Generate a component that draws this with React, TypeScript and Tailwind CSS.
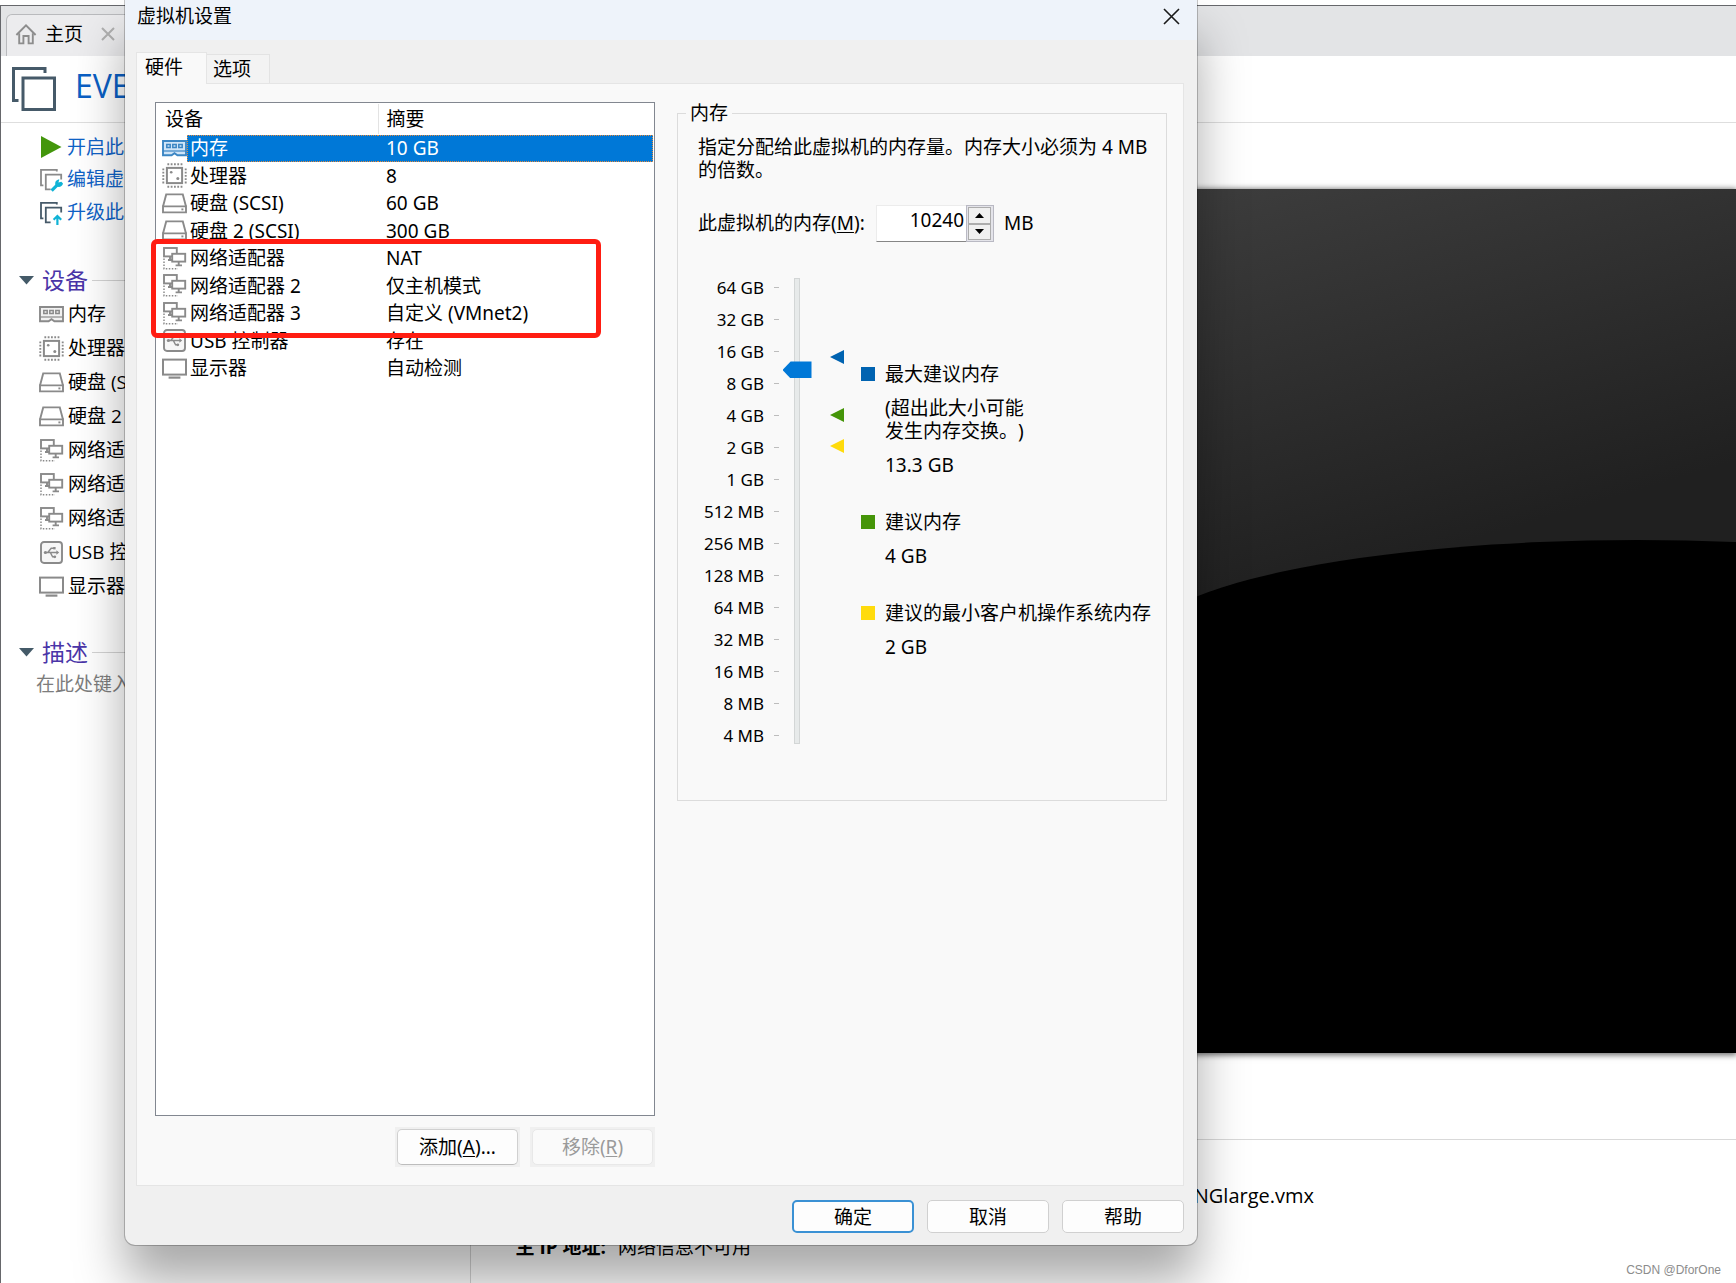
import React from "react";

type IconProps = { kind: string; active?: boolean };

function DeviceIcon({ kind, active }: IconProps) {
  const c = active ? "#3b86c4" : "#8a8a8a";
  return (
    <svg width="25" height="25" viewBox="0 0 25 25" fill="none" stroke={c} strokeWidth="1.9" className="shrink-0" aria-hidden="true">
      {kind === "memory" && (
        <>
          <path d="M1 5H24V19.2H15.4L12.5 17.2L9.6 19.2H1Z" fill={active ? "#cfe4f7" : "#f1f1f1"} />
          <path d="M4.8 8.4h3.4v3H4.8zM10.8 8.4h3.4v3h-3.4zM16.8 8.4h3.4v3h-3.4z" strokeWidth="1.5" />
          <path d="M1 15H24" strokeWidth="1.2" />
        </>
      )}
      {kind === "cpu" && (
        <>
          <rect x="4.9" y="4.9" width="15.2" height="15.2" strokeWidth="2" />
          <path d="M5.4 1.3H20.4M5.4 23.7H20.4" strokeWidth="1.9" strokeDasharray="1.8 1.5" />
          <path d="M1.3 5.4V20.4M23.7 5.4V20.4" strokeWidth="1.9" strokeDasharray="1.8 1.5" />
          <circle cx="9.2" cy="9.2" r="1.3" fill={c} stroke="none" />
          <circle cx="15.8" cy="15.6" r="1.5" fill={c} stroke="none" />
        </>
      )}
      {kind === "disk" && (
        <>
          <path d="M1 15.4L4.2 3.4H20.8L24 15.4" />
          <path d="M1 15.4H24V21.4H1Z" />
          <path d="M19.4 18.4H21.4" />
        </>
      )}
      {kind === "net" && (
        <>
          <rect x="2" y="2" width="12.8" height="8.4" />
          <path d="M6 14H10M8 10.6V14" />
          <rect x="10.2" y="7.8" width="13" height="7.8" fill="#fff" />
          <path d="M16.7 16V19.4M13.6 19.4H20" />
          <path d="M2 12.6V22.8H16" strokeDasharray="1.5 1.5" strokeWidth="1.5" />
        </>
      )}
      {kind === "usb" && (
        <>
          <rect x="2" y="2" width="21" height="21" rx="3" fill="#f6f6f6" />
          <path d="M6.4 12.5H18.4M9 12.3L12.2 8.2H15M11.4 12.7L13.6 16.8H15.6" strokeWidth="1.4" />
          <circle cx="6.4" cy="12.5" r="1.6" fill={c} stroke="none" />
          <path d="M17.4 10.2L20.2 12.5L17.4 14.8Z" fill={c} stroke="none" />
          <rect x="14.2" y="7" width="2.4" height="2.4" fill={c} stroke="none" />
          <circle cx="15.8" cy="16.8" r="1.4" fill={c} stroke="none" />
        </>
      )}
      {kind === "display" && (
        <>
          <rect x="1" y="3.6" width="23" height="15" strokeWidth="2" />
          <path d="M6.6 21.6H18.4" strokeWidth="2.2" />
        </>
      )}
    </svg>
  );
}

const devices = [
  { kind: "memory", name: "内存", summary: "10 GB" },
  { kind: "cpu", name: "处理器", summary: "8" },
  { kind: "disk", name: "硬盘 (SCSI)", summary: "60 GB" },
  { kind: "disk", name: "硬盘 2 (SCSI)", summary: "300 GB" },
  { kind: "net", name: "网络适配器", summary: "NAT" },
  { kind: "net", name: "网络适配器 2", summary: "仅主机模式" },
  { kind: "net", name: "网络适配器 3", summary: "自定义 (VMnet2)" },
  { kind: "usb", name: "USB 控制器", summary: "存在" },
  { kind: "display", name: "显示器", summary: "自动检测" },
];

const scale = ["64 GB", "32 GB", "16 GB", "8 GB", "4 GB", "2 GB", "1 GB", "512 MB", "256 MB", "128 MB", "64 MB", "32 MB", "16 MB", "8 MB", "4 MB"];

function SectionHeading({ children }: { children: React.ReactNode }) {
  return (
    <div className="flex h-[34px] items-center pl-[18px]">
      <svg width="15" height="9" viewBox="0 0 15 9" className="mr-2 shrink-0" aria-hidden="true">
        <path d="M0 0H15L7.5 8.5Z" fill="#445a68" />
      </svg>
      <h2 className="mr-1 text-[23px] leading-8 text-[#4a35a8]">{children}</h2>
      <div className="h-px flex-1 bg-[#d4d4d4]" />
    </div>
  );
}

function WindowsGlyph({ kind }: { kind: "edit" | "upgrade" }) {
  const c = kind === "edit" ? "#8a8a8a" : "#465a69";
  return (
    <svg width="24" height="24" viewBox="0 0 24 24" fill="none" stroke={c} strokeWidth="1.8" aria-hidden="true">
      <path d="M17.8 3.4V1.8H2V17.4H4.4" />
      <path d="M11.6 21.4H6.8V6.6H22.2V11.4" />
      {kind === "edit" ? (
        <>
          <path d="M12.6 22.6L18.4 16.8" stroke="#10b3d6" strokeWidth="3.2" />
          <path d="M20.4 11.6L19.4 14.6L22.4 13.8L24 15.6C23.4 18.4 20.4 19.6 18.2 18.6L16.4 16.8C15.6 14 17.4 11.6 20.4 11.6Z" fill="#10b3d6" stroke="none" />
        </>
      ) : (
        <path d="M18.4 24V15.8M14.6 18.8L18.4 15L22.2 18.8" stroke="#10b3d6" strokeWidth="2.2" />
      )}
    </svg>
  );
}

function Library() {
  return (
    <div className="flex min-h-screen flex-col bg-white pt-[5px] font-['Open_Sans','Noto_Sans_CJK_SC',sans-serif]">
      <div className="flex flex-1 flex-col border-t border-l border-[#66676b]">
        <div className="flex h-[50px] items-end bg-[#e3e4e6] pl-[5px]">
          <div className="flex h-[42px] w-[130px] items-center rounded-t-md border border-b-0 border-[#b9babd] bg-[#ececee] pb-1 pl-2">
            <svg width="22" height="22" viewBox="0 0 22 22" fill="none" stroke="#8d8d8d" strokeWidth="1.9" aria-hidden="true">
              <path d="M1.4 12L11 2.4L20.6 12" />
              <path d="M4.2 10.2V20.4H8.4V13H13.6V20.4H17.8V10.2" />
            </svg>
            <a href="#home" className="ml-2 w-[56px] text-[19px] leading-6 text-black">主页</a>
            <button aria-label="关闭主页">
              <svg width="14" height="14" viewBox="0 0 14 14" stroke="#b0b0b0" strokeWidth="2" aria-hidden="true">
                <path d="M1 1L13 13M13 1L1 13" />
              </svg>
            </button>
          </div>
        </div>
        <header className="flex h-[67px] items-start border-b border-[#dedede] pt-2.5 pl-[10px]">
          <svg width="46" height="46" viewBox="0 0 46 46" fill="none" stroke="#465a69" strokeWidth="3" aria-hidden="true">
            <path d="M34 7V2.5H2.5V34.5H7.5" />
            <rect x="12" y="12" width="31.5" height="31.5" />
          </svg>
          <h1 className="ml-[18px] text-[32px] leading-10 text-[#0a5fc4]">EVE</h1>
        </header>
        <div className="flex flex-1">
          <aside className="w-[470px] border-r border-[#d4d4d4] pt-2">
            <ul className="pl-[38px] text-[19px] text-[#0f62c6]">
              <li className="flex h-8 items-center gap-1">
                <svg width="24" height="24" viewBox="0 0 24 24" aria-hidden="true">
                  <path d="M2 1L22.5 12L2 23Z" fill="#43960c" />
                </svg>
                <a href="#start">开启此</a>
              </li>
              <li className="flex h-[33px] items-center gap-1">
                <WindowsGlyph kind="edit" />
                <a href="#edit">编辑虚</a>
              </li>
              <li className="flex h-[33px] items-center gap-1">
                <WindowsGlyph kind="upgrade" />
                <a href="#upgrade">升级此</a>
              </li>
            </ul>
            <section className="mt-[34px]">
              <SectionHeading>设备</SectionHeading>
              <ul className="pl-[38px] text-[19px] text-black">
                {devices.map((d) => (
                  <li key={d.name} className="flex h-[34px] items-center gap-1">
                    <DeviceIcon kind={d.kind} />
                    {d.name}
                  </li>
                ))}
              </ul>
            </section>
            <section className="mt-8">
              <SectionHeading>描述</SectionHeading>
              <p className="pl-[35px] text-[19px] leading-[30px] text-[#7d7d7d]">在此处键入</p>
            </section>
          </aside>
          <main className="min-w-0 flex-1">
            <div className="mt-[66px] ml-[420px] h-[864px] bg-black shadow-[0_1px_6px_1px_rgba(0,0,0,0.6)]">
              <svg width="100%" height="100%" viewBox="0 0 846 864" preserveAspectRatio="none" aria-hidden="true">
                <defs>
                  <linearGradient id="wall" gradientUnits="userSpaceOnUse" x1="300" y1="0" x2="420" y2="400">
                    <stop offset="0" stopColor="#3d3d3d" />
                    <stop offset="1" stopColor="#202020" />
                  </linearGradient>
                </defs>
                <rect width="846" height="864" fill="url(#wall)" />
                <ellipse cx="747" cy="458" rx="500" ry="107" fill="#000" />
                <rect y="458" width="846" height="406" fill="#000" />
              </svg>
            </div>
            <div className="mt-[86px] border-t border-[#d9d9d9] pt-11 leading-6 text-black">
              <dl className="grid grid-cols-[139px_704px] gap-y-[27px]">
                <dt className="text-right text-[19px] font-bold">配置文件:</dt>
                <dd className="text-right text-[20px]">EVE-NGlarge.vmx</dd>
                <dt className="pr-1 text-right text-[19px] font-bold">主 IP 地址:</dt>
                <dd className="pl-2 text-[19px]">网络信息不可用</dd>
              </dl>
            </div>
          </main>
        </div>
      </div>
    </div>
  );
}

function HardwareTable() {
  return (
    <div className="relative h-[1014px] w-[500px] border border-[#828790] bg-white px-px pt-px">
      <table className="w-full table-fixed border-collapse text-left text-[19px] leading-[22px]">
        <thead>
          <tr className="h-[30px]">
            <th className="w-[221px] border-r border-[#e3e3e3] pl-2 font-normal">设备</th>
            <th className="pl-2 font-normal">摘要</th>
          </tr>
        </thead>
        <tbody>
          {devices.map((d, i) => (
            <tr key={d.name} className="odd:h-7 even:h-[27px]">
              <td className="p-0">
                <div className="flex items-center pl-[5px]">
                  <DeviceIcon kind={d.kind} active={i === 0} />
                  <span
                    className={
                      i === 0
                        ? "flex h-[27px] flex-1 items-center border border-r-0 border-dotted border-[#e58a3c] bg-[#0078d7] pl-0.5 text-white"
                        : "flex h-[27px] flex-1 items-center pl-[3px]"
                    }
                  >
                    {d.name}
                  </span>
                </div>
              </td>
              <td className="p-0">
                <div
                  className={
                    i === 0
                      ? "flex h-[27px] items-center border border-l-0 border-dotted border-[#e58a3c] bg-[#0078d7] pl-2 text-white"
                      : "flex h-[27px] items-center pl-2"
                  }
                >
                  {d.summary}
                </div>
              </td>
            </tr>
          ))}
        </tbody>
      </table>
      <div className="absolute top-[136px] -left-[5px] h-[99px] w-[450px] rounded-md border-[5px] border-[#ff1d12]" />
    </div>
  );
}

function Marker({ color }: { color: string }) {
  return (
    <svg width="14" height="14" viewBox="0 0 14 14" className="block" aria-hidden="true">
      <path d="M0 7L14 0V14Z" fill={color} />
    </svg>
  );
}

function MemoryPanel() {
  return (
    <fieldset className="h-[699px] w-[490px] min-w-0 self-start border border-[#dcdcdc] px-5 text-[19px] leading-[23px]">
      <legend className="-ml-3 px-1">内存</legend>
      <p className="mt-[11px] -mr-3">指定分配给此虚拟机的内存量。内存大小必须为 4 MB 的倍数。</p>
      <div className="mt-[23px] flex h-[37px] items-center">
        <label htmlFor="mem" className="w-[178px]">
          此虚拟机的内存(<u className="underline-offset-2">M</u>):
        </label>
        <input
          id="mem"
          defaultValue="10240"
          className="h-[37px] w-[90px] border border-r-0 border-[#ececec] border-b-[#868686] bg-white pr-0.5 pb-2 text-right outline-none"
        />
        <div className="mr-2.5 flex h-[37px] w-[28px] flex-col border border-[#b9b9c3] bg-[#e4e4ea] p-px pr-0.5">
          <button aria-label="增加" className="flex flex-1 items-center justify-center border border-[#adadad] bg-[#f0f0f0]">
            <svg width="9" height="5" viewBox="0 0 9 5" aria-hidden="true"><path d="M4.5 0L9 5H0Z" /></svg>
          </button>
          <button aria-label="减少" className="flex flex-1 items-center justify-center border border-[#adadad] bg-[#f0f0f0]">
            <svg width="9" height="5" viewBox="0 0 9 5" aria-hidden="true"><path d="M4.5 5L9 0H0Z" /></svg>
          </button>
        </div>
        <span>MB</span>
      </div>
      <div className="mt-[29px] flex items-start">
        <ul className="w-[81px] shrink-0 text-right text-[17px]">
          {scale.map((s) => (
            <li key={s} className="flex h-8 items-center justify-end gap-2.5 whitespace-nowrap">
              {s}
              <i className="h-px w-[5px] bg-[#bdbdbd]" />
            </li>
          ))}
        </ul>
        <div className="mt-[7px] ml-[3px] grid h-[466px] w-[30px] shrink-0 justify-items-center">
          <div className="col-start-1 row-start-1 h-full w-[6px] border border-[#d3d6d6] bg-[#e7eaea]" />
          <input
            type="range"
            min="0"
            max="14"
            step="0.1"
            defaultValue="11.4"
            aria-label="此虚拟机的内存"
            className="col-start-1 row-start-1 m-0 h-full w-[29px] appearance-none bg-transparent [direction:rtl] [writing-mode:vertical-lr] [&::-webkit-slider-thumb]:h-[17px] [&::-webkit-slider-thumb]:w-[29px] [&::-webkit-slider-thumb]:appearance-none [&::-webkit-slider-thumb]:rounded-none [&::-webkit-slider-thumb]:bg-[#0078d7] [&::-webkit-slider-thumb]:[clip-path:polygon(0_50%,28%_0,100%_0,100%_100%,28%_100%)]"
          />
        </div>
        <div className="mt-[79px] ml-[18px] shrink-0">
          <Marker color="#0063b1" />
          <div className="mt-11"><Marker color="#459509" /></div>
          <div className="mt-[17px]"><Marker color="#ffdb0c" /></div>
        </div>
        <ul className="mt-[92px] ml-[17px] flex shrink-0 flex-col gap-[34px] whitespace-nowrap">
          <li className="flex gap-2.5">
            <div className="mt-1 h-3.5 w-3.5 bg-[#0063b1]" />
            <div>
              <p>最大建议内存</p>
              <p className="mt-[11px] [text-spacing-trim:space-all]">(超出此大小可能<br />发生内存交换。)</p>
              <p className="mt-[11px]">13.3 GB</p>
            </div>
          </li>
          <li className="flex gap-2.5">
            <div className="mt-1 h-3.5 w-3.5 bg-[#459509]" />
            <div>
              <p>建议内存</p>
              <p className="mt-[11px]">4 GB</p>
            </div>
          </li>
          <li className="flex gap-2.5">
            <div className="mt-1 h-3.5 w-3.5 bg-[#ffdb0c]" />
            <div>
              <p>建议的最小客户机操作系统内存</p>
              <p className="mt-[11px]">2 GB</p>
            </div>
          </li>
        </ul>
      </div>
    </fieldset>
  );
}

function SettingsDialog() {
  return (
    <div
      role="dialog"
      aria-label="虚拟机设置"
      className="absolute top-0 left-[125px] w-[1072px] rounded-b-[10px] bg-[#f0f0f0] font-['Noto_Sans','Noto_Sans_CJK_SC',sans-serif] text-[19px] text-black shadow-[0_0_0_1px_rgba(0,0,0,0.22),0_36px_50px_rgba(0,0,0,0.34)]"
    >
      <div className="flex h-10 items-center justify-between bg-[#eef3fa] pr-[17px] pb-2 pl-3">
        <h2 className="leading-6">虚拟机设置</h2>
        <button aria-label="关闭">
          <svg width="17" height="17" viewBox="0 0 17 17" stroke="#1a1a1a" strokeWidth="1.6" aria-hidden="true">
            <path d="M1 1L16 16M16 1L1 16" />
          </svg>
        </button>
      </div>
      <div className="pt-3 pr-[13px] pl-[11px]">
        <div role="tablist" className="flex h-[31px] items-end leading-6">
          <button role="tab" aria-selected="true" className="relative -mb-px h-8 w-[71px] border border-b-0 border-[#e5e5e5] bg-[#f9f9f9] pr-[15px] pb-1">
            硬件
          </button>
          <button role="tab" aria-selected="false" className="h-[29px] w-[63px] border border-b-0 border-l-0 border-[#e3e3e3] bg-[#f3f3f3] pr-3">
            选项
          </button>
        </div>
        <div className="flex h-[1103px] justify-between border border-[#e5e5e5] bg-[#f9f9f9] pt-[18px] pr-4 pl-[18px]">
          <div>
            <HardwareTable />
            <div className="mt-[11px] flex justify-end gap-2.5 leading-6">
              <div className="w-[125px] bg-[#f0f0f0] p-0.5">
                <button className="h-9 w-full rounded-[5px] border border-[#d0d0d0] border-b-[#bdbdbd] bg-[#fdfdfd]">
                  添加(<u className="underline-offset-2">A</u>)...
                </button>
              </div>
              <div className="w-[125px] bg-[#f0f0f0] p-0.5">
                <button disabled className="h-9 w-full rounded-[5px] border border-[#e8e8e8] bg-[#fafafa] text-[#9a9a9a]">
                  移除(<u className="underline-offset-2">R</u>)
                </button>
              </div>
            </div>
          </div>
          <MemoryPanel />
        </div>
        <div className="flex justify-end gap-[13px] pt-3.5 pb-3 leading-6">
          <button className="h-[33px] w-[122px] rounded-[5px] border-2 border-[#3a91d4] bg-[#fdfdfd]">确定</button>
          <button className="h-[33px] w-[122px] rounded-[5px] border border-[#d0d0d0] bg-[#fdfdfd]">取消</button>
          <button className="h-[33px] w-[122px] rounded-[5px] border border-[#d0d0d0] bg-[#fdfdfd]">帮助</button>
        </div>
      </div>
    </div>
  );
}

export default function App() {
  return (
    <div className="relative overflow-hidden">
      <Library />
      <SettingsDialog />
      <div className="absolute right-[15px] bottom-[5px] font-['Liberation_Sans',sans-serif] text-[12px] leading-4 text-[#8c8c8c]">CSDN @DforOne</div>
    </div>
  );
}
